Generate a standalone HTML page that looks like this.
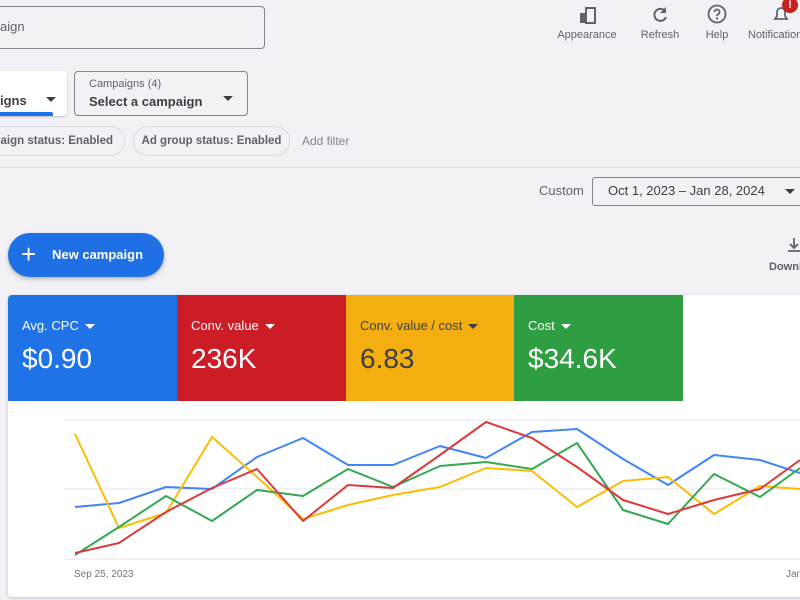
<!DOCTYPE html>
<html><head><style>
*{margin:0;padding:0;box-sizing:border-box}
body{width:800px;height:600px;overflow:hidden;background:#f1f1f6;font-family:"Liberation Sans",Arial,sans-serif;position:relative;color:#3c4043}
.a{position:absolute}
.t{font-size:11px;color:#5f6368;text-align:center}
.chip{position:absolute;top:126px;height:30px;border:1px solid #dadce0;border-radius:15px;font-size:11.5px;font-weight:bold;color:#5f6368;line-height:28px;text-align:center;white-space:nowrap;overflow:hidden}
.tile{position:absolute;top:295px;height:106px;width:169px;color:#fff}
.tile .l{position:absolute;left:14px;top:23px;font-size:13px}
.tile .v{position:absolute;left:14px;top:48px;font-size:28px}
.tri{display:inline-block;width:0;height:0;border-left:5px solid transparent;border-right:5px solid transparent;border-top:5px solid currentColor;vertical-align:middle;margin-left:6px}
</style></head><body>
<div class="a" style="left:-10px;top:6px;width:275px;height:43px;border:1px solid #80868b;border-radius:4px"></div>
<div class="a" style="left:0;top:19px;font-size:13px;color:#5f6368">aign</div>

<svg class="a" style="left:578px;top:5px" width="20" height="20" viewBox="0 0 20 20"><rect x="2" y="8" width="6" height="10" fill="#5f6368"/><rect x="8" y="3" width="9" height="15" fill="none" stroke="#5f6368" stroke-width="2"/></svg>
<div class="a t" style="left:552px;top:29px;width:70px">Appearance</div>
<svg class="a" style="left:650px;top:5px" width="20" height="20" viewBox="0 0 20 20"><path d="M15 6A6 6 0 1 0 16 12" fill="none" stroke="#5f6368" stroke-width="2"/><path d="M16 2v6h-6z" fill="#5f6368"/></svg>
<div class="a t" style="left:630px;top:29px;width:60px">Refresh</div>
<svg class="a" style="left:707px;top:4px" width="20" height="20" viewBox="0 0 20 20"><circle cx="10" cy="10" r="8.5" fill="none" stroke="#5f6368" stroke-width="1.8"/><path d="M7.5 8a2.5 2.5 0 1 1 3.5 2.3c-.8.4-1 .9-1 1.7" fill="none" stroke="#5f6368" stroke-width="1.8"/><circle cx="10" cy="14.5" r="1.1" fill="#5f6368"/></svg>
<div class="a t" style="left:697px;top:29px;width:40px">Help</div>
<svg class="a" style="left:771px;top:4px" width="20" height="20" viewBox="0 0 20 20"><path d="M4 15h12l-2-3V8a4 4 0 0 0-8 0v4z" fill="none" stroke="#5f6368" stroke-width="1.8"/></svg>
<div class="a" style="left:782px;top:-3px;width:16px;height:16px;border-radius:50%;background:#c5221f;color:#fff;font-size:11px;font-weight:bold;text-align:center;line-height:16px">!</div>
<div class="a t" style="left:748px;top:29px;text-align:left">Notifications</div>

<div class="a" style="left:-10px;top:71px;width:77px;height:45px;background:#fff;border-radius:4px;box-shadow:0 1px 2px rgba(0,0,0,.2)"></div>
<div class="a" style="left:0;top:93px;font-size:13px;font-weight:bold;color:#3c4043">igns</div>
<div class="a" style="left:46px;top:91px;color:#3c4043"><span class="tri" style="margin:0"></span></div>
<div class="a" style="left:0;top:112px;width:53px;height:4px;background:#1a73e8;border-radius:0 2px 0 0"></div>
<div class="a" style="left:74px;top:71px;width:174px;height:45px;border:1px solid #80868b;border-radius:4px"></div>
<div class="a" style="left:89px;top:78px;font-size:11px;color:#5f6368">Campaigns (4)</div>
<div class="a" style="left:89px;top:94px;font-size:13px;font-weight:bold;color:#3c4043">Select a campaign</div>
<div class="a" style="left:223px;top:90px;color:#3c4043"><span class="tri" style="margin:0"></span></div>

<div class="chip" style="left:-42px;width:167px;text-align:right;padding-right:11px">mpaign status: Enabled</div>
<div class="chip" style="left:133px;width:157px">Ad group status: Enabled</div>
<div class="a" style="left:302px;top:134px;font-size:12px;color:#80868b">Add filter</div>
<div class="a" style="left:0;top:167px;width:800px;height:1px;background:#dfe0e4"></div>

<div class="a" style="left:539px;top:183px;font-size:13px;color:#5f6368">Custom</div>
<div class="a" style="left:592px;top:177px;width:220px;height:29px;border:1px solid #80868b;border-radius:3px"></div>
<div class="a" style="left:608px;top:183px;font-size:13px;color:#3c4043">Oct 1, 2023 – Jan 28, 2024</div>
<div class="a" style="left:785px;top:183px;color:#3c4043"><span class="tri" style="margin:0"></span></div>

<div class="a" style="left:8px;top:233px;width:156px;height:44px;border-radius:22px;background:#1f6fe5;box-shadow:0 2px 4px rgba(0,0,0,.25)"></div>
<div class="a" style="left:21px;top:241px;color:#fff;font-size:26px;line-height:26px;font-weight:300">+</div>
<div class="a" style="left:52px;top:247px;color:#fff;font-size:13px;font-weight:bold">New campaign</div>
<svg class="a" style="left:786px;top:237px" width="16" height="18" viewBox="0 0 16 18"><path d="M8 1v10M4 7l4 4 4-4M2 14h12" fill="none" stroke="#5f6368" stroke-width="1.8"/></svg>
<div class="a" style="left:769px;top:261px;font-size:11px;color:#5f6368;font-weight:bold">Downl</div>

<div class="a" style="left:8px;top:295px;width:810px;height:302px;background:#fff;border-radius:4px;box-shadow:0 1px 3px rgba(0,0,0,.2)"></div>
<div class="tile" style="left:8px;background:#1f73e6;border-radius:4px 0 0 0"><div class="l">Avg. CPC<span class="tri"></span></div><div class="v">$0.90</div></div>
<div class="tile" style="left:177px;background:#cc1d27"><div class="l">Conv. value<span class="tri"></span></div><div class="v">236K</div></div>
<div class="tile" style="left:346px;background:#f4ae10;color:#3c4043"><div class="l">Conv. value / cost<span class="tri"></span></div><div class="v">6.83</div></div>
<div class="tile" style="left:514px;background:#2f9e42"><div class="l">Cost<span class="tri"></span></div><div class="v">$34.6K</div></div>

<svg class="a" style="left:0;top:400px" width="800" height="200" viewBox="0 400 800 200">
<g stroke="#e4e4e8" stroke-width="1"><line x1="64" y1="420" x2="800" y2="420"/><line x1="64" y1="489" x2="800" y2="489"/><line x1="64" y1="559" x2="800" y2="559"/></g>
<g fill="none" stroke-width="2" stroke-linejoin="round">
<polyline stroke="#4285f4" points="75,507 119,503 166,487 212,489 257,457 303,438 348,465 393,465 440,446 486,458 532,432 577,429 623,459 668,485 714,455 760,460 800,473"/>
<polyline stroke="#fbbc04" points="75,434 119,528 166,513 212,437 257,477 303,519 348,505 393,495 440,487 486,468 532,471 577,507 623,481 668,477 714,514 760,486 800,489"/>
<polyline stroke="#34a853" points="75,555 119,527 166,496 212,521 257,490 303,496 348,469 393,487 440,466 486,462 532,469 577,443 623,510 668,524 714,474 760,497 800,468"/>
<polyline stroke="#db3b3b" points="75,553 119,543 166,512 212,488 257,469 303,521 348,485 393,488 440,455 486,422 532,438 577,467 623,500 668,514 714,500 760,489 800,460"/>
</g>
<text x="74" y="577" font-size="10" fill="#70757a" font-family="Liberation Sans">Sep 25, 2023</text>
<text x="786" y="577" font-size="10" fill="#70757a" font-family="Liberation Sans">Jan</text>
</svg>
</body></html>
